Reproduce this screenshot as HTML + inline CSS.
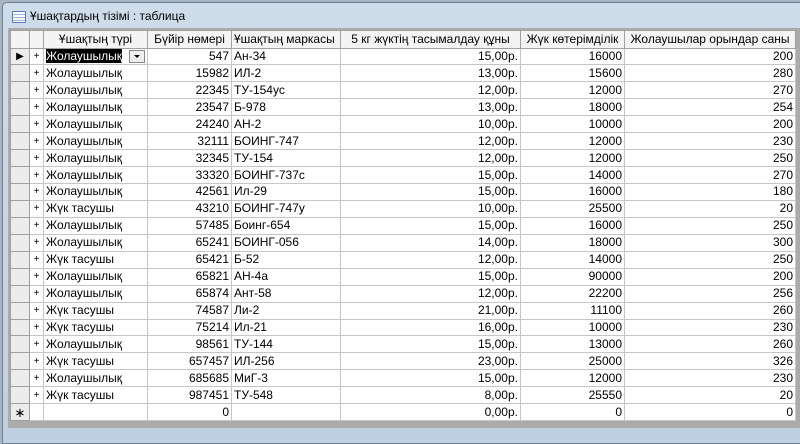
<!DOCTYPE html>
<html><head><meta charset="utf-8"><style>
html,body{margin:0;padding:0;width:800px;height:428px;overflow:hidden;background:#a9b4c2;font-family:"Liberation Sans",Arial,sans-serif;}
.win{position:absolute;left:2px;top:2px;width:806px;height:440px;background:linear-gradient(#cfdcea,#bfd0e3);border:1px solid #6f7f92;border-radius:5px 5px 0 0;}
.title{position:absolute;left:30px;top:9px;font-size:12px;color:#000;}
.icon{position:absolute;left:12px;top:11px;width:12px;height:10px;border:1px solid #5a7bb5;background:repeating-linear-gradient(#fff 0 2px,#9bb6dd 2px 3px);}
.area{position:absolute;left:8px;top:28px;width:792px;height:400px;background:#ababab;}
table{position:absolute;left:10px;top:30px;border-collapse:collapse;font-size:12px;background:#fff;table-layout:fixed;}
td,th{border:1px solid #c6c6c6;height:15.95px;padding:0 2px;white-space:nowrap;overflow:hidden;line-height:15px;}
th{font-weight:normal;background:#f4f4f4;border:1px solid #a0a0a0;height:16.5px;}
td.sel{background:#ececec;border-color:#a0a0a0;padding:0;text-align:center;font-size:10px;}
td.pl{text-align:center;font-size:10px;padding:0;}
td.r{text-align:right;}
.hi{background:#000;color:#fff;}
.dd{display:inline-block;width:14px;height:11px;border:1px solid #888;background:#eee;vertical-align:middle;float:right;margin-top:1px;position:relative}
.dd:after{content:"";position:absolute;left:4px;top:4px;border:3px solid transparent;border-top:3px solid #000;}
</style></head><body>
<div class="win"></div>
<div class="icon"></div>
<div class="title">Ұшақтардың тізімі : таблица</div>
<div class="area"></div>
<table>
<colgroup><col style="width:19px"><col style="width:14px"><col style="width:104px"><col style="width:84px"><col style="width:109px"><col style="width:180px"><col style="width:104px"><col style="width:171px"></colgroup>
<tr><th></th><th></th><th>Ұшақтың түрі</th><th>Бүйір нөмері</th><th style="text-align:left">Ұшақтың маркасы</th><th>5 кг жүктің тасымалдау құны</th><th>Жүк көтерімділік</th><th>Жолаушылар орындар саны</th></tr>
<tr><td class="sel">&#9654;</td><td class="pl">+</td><td><span class="hi">Жолаушылық</span><span class="dd"></span></td><td class="r">547</td><td>Ан-34</td><td class="r">15,00р.</td><td class="r">16000</td><td class="r">200</td></tr>
<tr><td class="sel"></td><td class="pl">+</td><td>Жолаушылық</td><td class="r">15982</td><td>ИЛ-2</td><td class="r">13,00р.</td><td class="r">15600</td><td class="r">280</td></tr>
<tr><td class="sel"></td><td class="pl">+</td><td>Жолаушылық</td><td class="r">22345</td><td>ТУ-154ус</td><td class="r">12,00р.</td><td class="r">12000</td><td class="r">270</td></tr>
<tr><td class="sel"></td><td class="pl">+</td><td>Жолаушылық</td><td class="r">23547</td><td>Б-978</td><td class="r">13,00р.</td><td class="r">18000</td><td class="r">254</td></tr>
<tr><td class="sel"></td><td class="pl">+</td><td>Жолаушылық</td><td class="r">24240</td><td>АН-2</td><td class="r">10,00р.</td><td class="r">10000</td><td class="r">200</td></tr>
<tr><td class="sel"></td><td class="pl">+</td><td>Жолаушылық</td><td class="r">32111</td><td>БОИНГ-747</td><td class="r">12,00р.</td><td class="r">12000</td><td class="r">230</td></tr>
<tr><td class="sel"></td><td class="pl">+</td><td>Жолаушылық</td><td class="r">32345</td><td>ТУ-154</td><td class="r">12,00р.</td><td class="r">12000</td><td class="r">250</td></tr>
<tr><td class="sel"></td><td class="pl">+</td><td>Жолаушылық</td><td class="r">33320</td><td>БОИНГ-737с</td><td class="r">15,00р.</td><td class="r">14000</td><td class="r">270</td></tr>
<tr><td class="sel"></td><td class="pl">+</td><td>Жолаушылық</td><td class="r">42561</td><td>Ил-29</td><td class="r">15,00р.</td><td class="r">16000</td><td class="r">180</td></tr>
<tr><td class="sel"></td><td class="pl">+</td><td>Жүк тасушы</td><td class="r">43210</td><td>БОИНГ-747у</td><td class="r">10,00р.</td><td class="r">25500</td><td class="r">20</td></tr>
<tr><td class="sel"></td><td class="pl">+</td><td>Жолаушылық</td><td class="r">57485</td><td>Боинг-654</td><td class="r">15,00р.</td><td class="r">16000</td><td class="r">250</td></tr>
<tr><td class="sel"></td><td class="pl">+</td><td>Жолаушылық</td><td class="r">65241</td><td>БОИНГ-056</td><td class="r">14,00р.</td><td class="r">18000</td><td class="r">300</td></tr>
<tr><td class="sel"></td><td class="pl">+</td><td>Жүк тасушы</td><td class="r">65421</td><td>Б-52</td><td class="r">12,00р.</td><td class="r">14000</td><td class="r">250</td></tr>
<tr><td class="sel"></td><td class="pl">+</td><td>Жолаушылық</td><td class="r">65821</td><td>АН-4а</td><td class="r">15,00р.</td><td class="r">90000</td><td class="r">200</td></tr>
<tr><td class="sel"></td><td class="pl">+</td><td>Жолаушылық</td><td class="r">65874</td><td>Ант-58</td><td class="r">12,00р.</td><td class="r">22200</td><td class="r">256</td></tr>
<tr><td class="sel"></td><td class="pl">+</td><td>Жүк тасушы</td><td class="r">74587</td><td>Ли-2</td><td class="r">21,00р.</td><td class="r">11100</td><td class="r">260</td></tr>
<tr><td class="sel"></td><td class="pl">+</td><td>Жүк тасушы</td><td class="r">75214</td><td>Ил-21</td><td class="r">16,00р.</td><td class="r">10000</td><td class="r">230</td></tr>
<tr><td class="sel"></td><td class="pl">+</td><td>Жолаушылық</td><td class="r">98561</td><td>ТУ-144</td><td class="r">15,00р.</td><td class="r">13000</td><td class="r">260</td></tr>
<tr><td class="sel"></td><td class="pl">+</td><td>Жүк тасушы</td><td class="r">657457</td><td>ИЛ-256</td><td class="r">23,00р.</td><td class="r">25000</td><td class="r">326</td></tr>
<tr><td class="sel"></td><td class="pl">+</td><td>Жолаушылық</td><td class="r">685685</td><td>МиГ-3</td><td class="r">15,00р.</td><td class="r">12000</td><td class="r">230</td></tr>
<tr><td class="sel"></td><td class="pl">+</td><td>Жүк тасушы</td><td class="r">987451</td><td>ТУ-548</td><td class="r">8,00р.</td><td class="r">25550</td><td class="r">20</td></tr>
<tr><td class="sel" style="font-size:13px">&#8727;</td><td class="pl"></td><td></td><td class="r">0</td><td></td><td class="r">0,00р.</td><td class="r">0</td><td class="r">0</td></tr>
</table>
</body></html>
